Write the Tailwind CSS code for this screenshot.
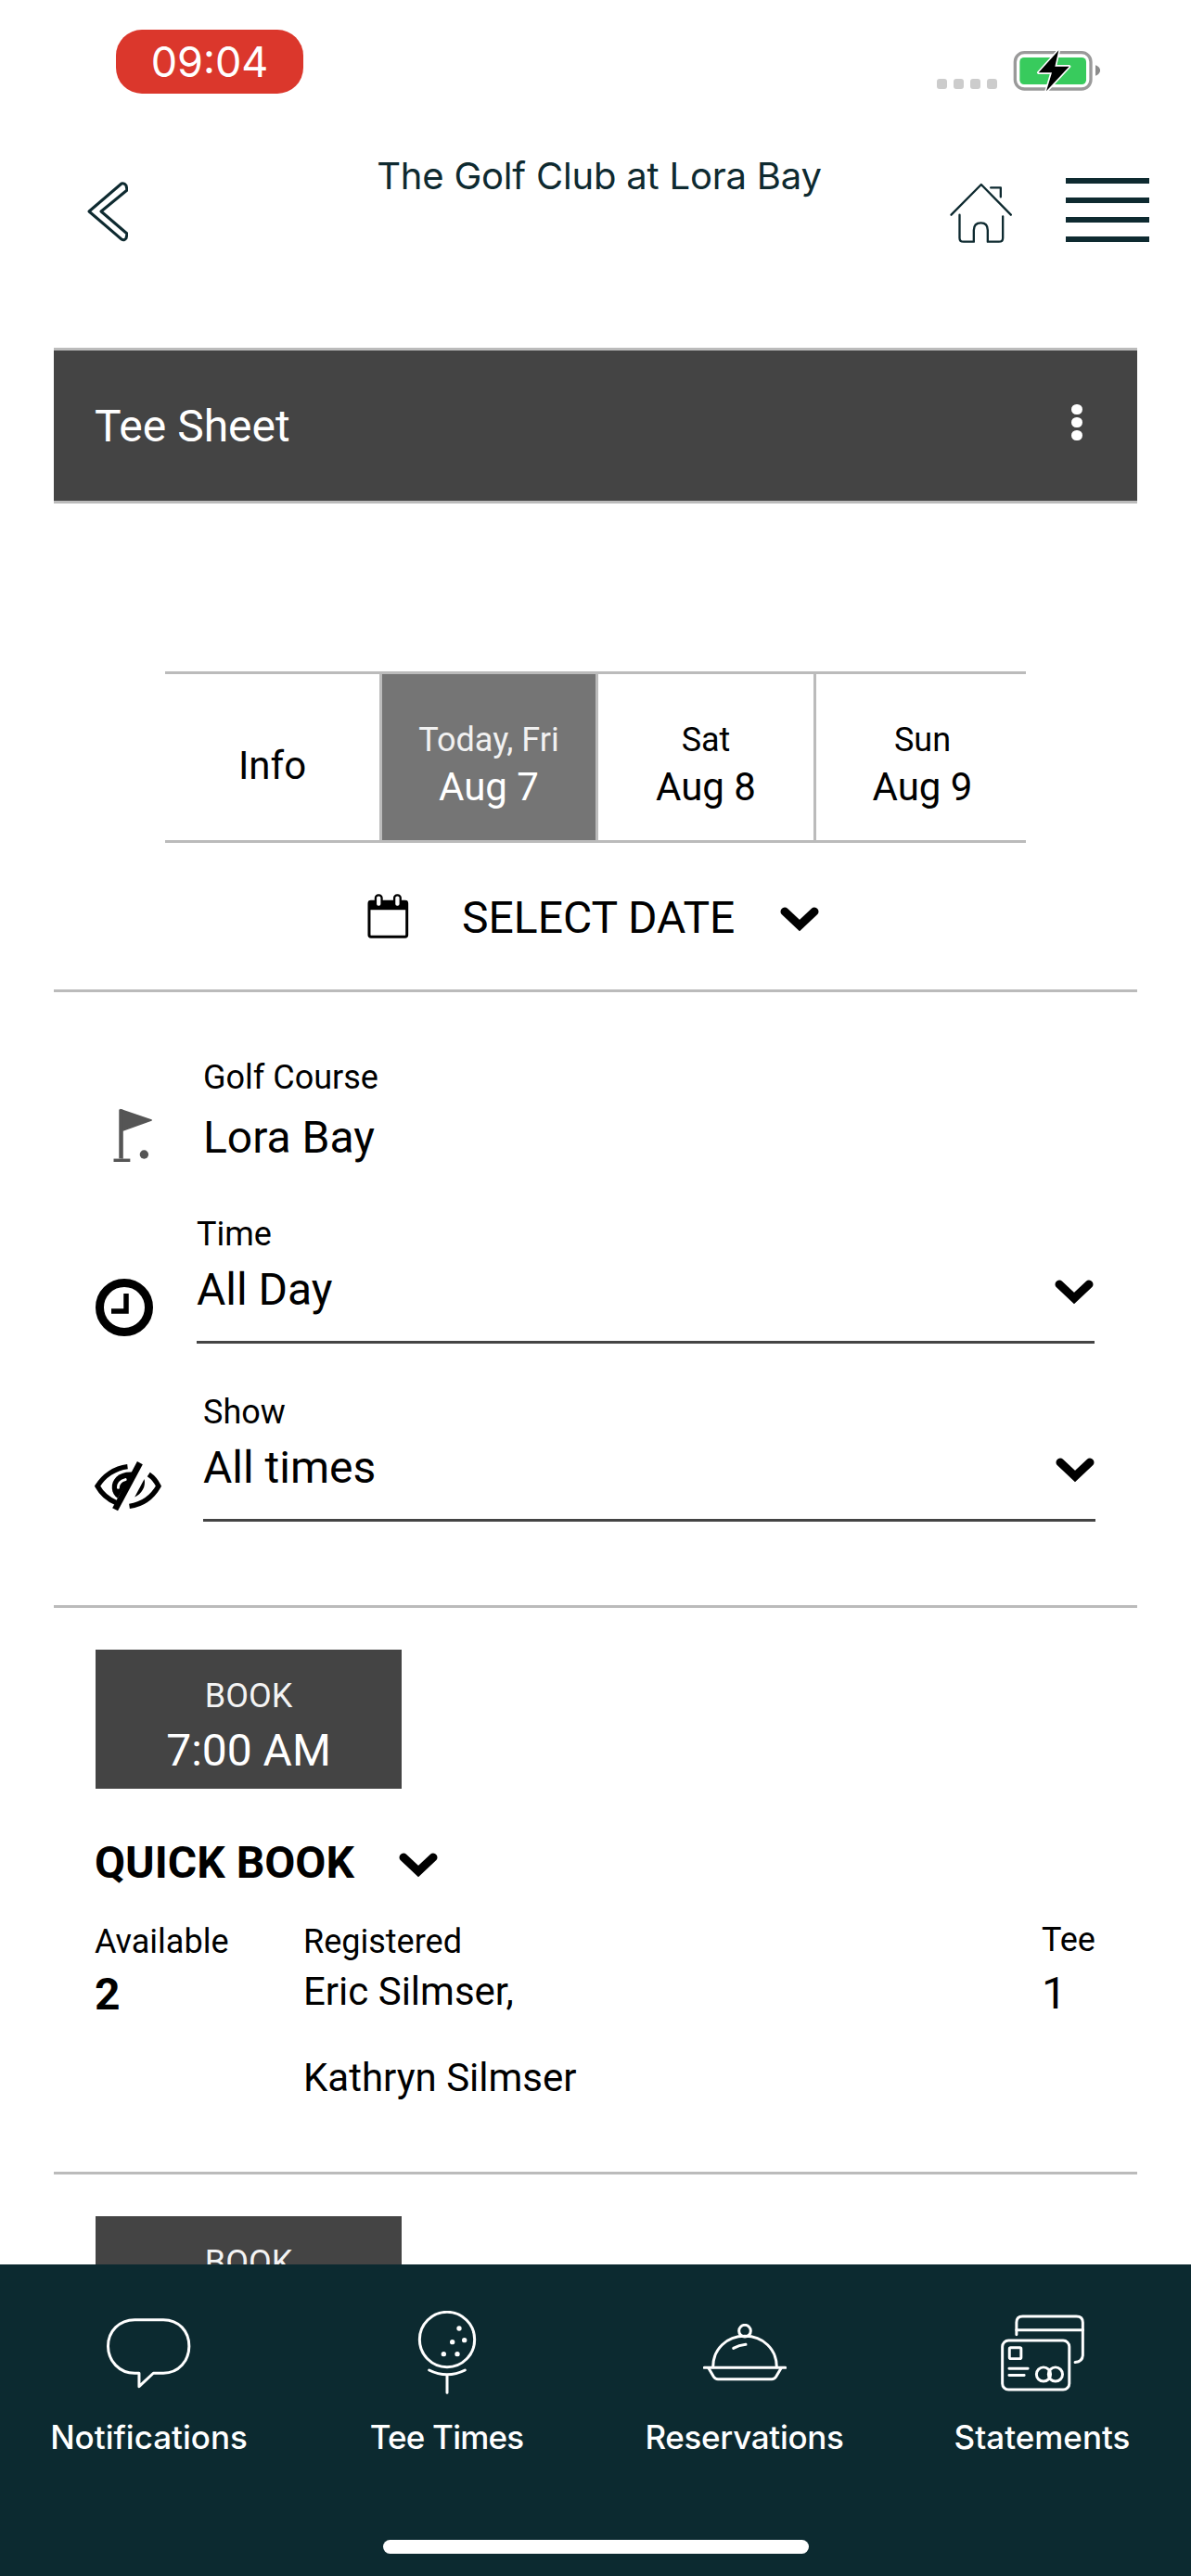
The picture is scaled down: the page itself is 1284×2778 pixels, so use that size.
<!DOCTYPE html>
<html lang="en">
<head>
  <meta charset="UTF-8" />
  <meta name="viewport" content="width=device-width, initial-scale=1" />
  <title>Tee Sheet</title>
  <script src="https://cdn.jsdelivr.net/npm/@tailwindcss/browser@4"></script>
</head>
<body class="bg-white">
<div class="relative w-[1284px] h-[2778px] overflow-hidden bg-white text-black font-['Roboto',sans-serif]">

  <!-- status bar -->
  <div class="h-[110px] flex items-start pt-[32px] pl-[125px]">
    <div class="w-[202px] h-[69px] rounded-[28px] bg-[#db372c] text-white flex items-center justify-center font-['Inter',sans-serif] text-[45px]">09:04</div>
    <div class="flex gap-[7px] mt-[53px] ml-[683px]">
      <span class="w-[11px] h-[11px] rounded-[3px] bg-[#ccc]"></span>
      <span class="w-[11px] h-[11px] rounded-[3px] bg-[#ccc]"></span>
      <span class="w-[11px] h-[11px] rounded-[3px] bg-[#ccc]"></span>
      <span class="w-[11px] h-[11px] rounded-[3px] bg-[#ccc]"></span>
    </div>
    <svg class="mt-[21px] ml-[17px]" width="94" height="46" viewBox="338 36 282 138">
      <rect x="345" y="47" width="245" height="118" rx="30" fill="none" stroke="#9a9a9a" stroke-width="10"/>
      <rect x="360" y="63" width="215" height="87" rx="14" fill="#38cb5d"/>
      <path d="M605 88 C616 92 622 100 620 108 C618 115 612 120 605 122 Z" fill="#8c8c8c"/>
      <path d="M486 40 L421 112 L464 112 L446 172 L520 92 L474 92 Z" fill="#000" stroke="#fff" stroke-width="10" stroke-linejoin="round" paint-order="stroke"/>
    </svg>
  </div>

  <!-- header -->
  <div class="h-[265px] flex items-start pl-[94px] pt-[82px]">
    <svg class="mt-[3px]" width="44" height="68" viewBox="94 195 44 68">
      <path d="M96 228 L131 198 Q134 197 136 200 L137 205 L109 228 L137 252 L136 257 Q134 260 131 258 Z" fill="none" stroke="#0e2a30" stroke-width="3" stroke-linejoin="round"/>
    </svg>
    <div class="ml-[266px] -mt-[27px] w-[484px] whitespace-nowrap text-center text-[#0e2a30] font-['Inter',sans-serif] text-[40px] tracking-[-0.2px] leading-[50px]">The Golf Club at Lora Bay</div>
    <svg class="ml-[134px] mt-[3px]" width="72" height="70" viewBox="130 460 215 210">
      <g fill="none" stroke="#0e2a30" stroke-width="7" stroke-linecap="round" stroke-linejoin="round">
        <path d="M140 570 L237 472 L333 570"/>
        <path d="M268 482 L300 482 L300 512"/>
        <path d="M167 570 L167 645 Q167 657 180 657 L213 657 L213 620 Q213 596 236 596 Q258 596 258 620 L258 657 L294 657 Q307 657 307 645 L307 575"/>
      </g>
    </svg>
    <div class="ml-[55px] w-[90px] flex flex-col gap-[15px]">
      <span class="h-[6px] bg-[#0e2a30]"></span>
      <span class="h-[6px] bg-[#0e2a30]"></span>
      <span class="h-[6px] bg-[#0e2a30]"></span>
      <span class="h-[6px] bg-[#0e2a30]"></span>
    </div>
  </div>

  <!-- title bar -->
  <div class="mx-[58px] h-[168px] bg-[#444] border-y-[3px] border-[#bbb] flex items-center justify-between pl-[44px] pr-[59px] text-white text-[48px]">
    <span class="pt-[2px]">Tee Sheet</span>
    <div class="flex flex-col gap-[3px] -mt-[8px]">
      <span class="w-[12px] h-[11px] rounded-full bg-white"></span>
      <span class="w-[12px] h-[11px] rounded-full bg-white"></span>
      <span class="w-[12px] h-[11px] rounded-full bg-white"></span>
    </div>
  </div>

  <!-- date tabs -->
  <div class="ml-[178px] mt-[181px] w-[928px] h-[185px] grid grid-cols-[231px_236px_232px_229px] border-y-[3px] border-[#bbb] text-center">
    <div class="flex items-center justify-center text-[42px] pt-[18px]">Info</div>
    <div class="border-x-[3px] border-[#bbb] bg-[#757575] text-white flex flex-col items-center justify-center pt-[17px]">
      <span class="text-[36px] leading-[44px] text-white/90">Today, Fri</span>
      <span class="text-[42px] leading-[52px] mt-[3px]">Aug 7</span>
    </div>
    <div class="flex flex-col items-center justify-center pt-[17px]">
      <span class="text-[36px] leading-[44px]">Sat</span>
      <span class="text-[42px] leading-[52px] mt-[3px]">Aug 8</span>
    </div>
    <div class="border-l-[3px] border-[#bbb] flex flex-col items-center justify-center pt-[17px] pl-[3px]">
      <span class="text-[36px] leading-[44px]">Sun</span>
      <span class="text-[42px] leading-[52px] mt-[3px]">Aug 9</span>
    </div>
  </div>

  <!-- date picker -->
  <div class="h-[161px] mx-[58px] border-b-[3px] border-[#bbb] flex items-start pl-[336px] pt-[53px]">
    <svg width="48" height="52" viewBox="45 35 145 155">
      <rect x="57" y="65" width="123" height="115" rx="6" fill="none" stroke="#000" stroke-width="9"/>
      <rect x="57" y="62" width="123" height="30" fill="#000"/>
      <rect x="78" y="44" width="20" height="38" rx="9" fill="#fff" stroke="#000" stroke-width="7"/>
      <rect x="139" y="44" width="20" height="38" rx="9" fill="#fff" stroke="#000" stroke-width="7"/>
    </svg>
    <span class="ml-[56px] text-[48px] leading-[56px]">SELECT DATE</span>
    <svg class="ml-[48px] mt-[15px]" width="44" height="28" viewBox="0 0 44 28">
      <path d="M6 6 L22 21 L38 6" fill="none" stroke="#000" stroke-width="9" stroke-linecap="round"/>
    </svg>
  </div>

  <!-- filters -->
  <div class="mx-[58px] h-[664px] border-b-[3px] border-[#bbb]">
    <div class="flex items-start pt-[70px] pl-[62px]">
      <svg class="mt-[54px] blur-[0.6px]" width="46" height="62" viewBox="120 95 147 198">
        <path d="M150 103 L258 140 L158 176 L158 272" fill="#555" stroke="#555" stroke-width="5" stroke-linejoin="round"/>
        <path d="M153 103 L153 272" stroke="#555" stroke-width="13"/>
        <path d="M128 278 L185 278" stroke="#555" stroke-width="11"/>
        <circle cx="233" cy="258" r="15" fill="#555"/>
      </svg>
      <div class="ml-[53px] flex flex-col">
        <span class="text-[36px] leading-[44px]">Golf Course</span>
        <span class="text-[48px] leading-[56px] mt-[15px]">Lora Bay</span>
      </div>
    </div>

    <div class="flex items-start mt-[53px] pl-[45px]">
      <svg class="mt-[70px]" width="62" height="62" viewBox="0 0 62 62">
        <circle cx="31" cy="31" r="26.5" fill="none" stroke="#000" stroke-width="9"/>
        <path d="M33 16 L33 35 L17 35" fill="none" stroke="#000" stroke-width="5.5"/>
      </svg>
      <div class="ml-[47px] w-[968px] border-b-[3px] border-[#444] h-[140px] flex flex-col relative">
        <span class="text-[36px] leading-[44px]">Time</span>
        <span class="text-[48px] leading-[56px] mt-[10px]">All Day</span>
        <svg class="absolute right-0 top-[70px]" width="44" height="28" viewBox="0 0 44 28">
          <path d="M6 6 L22 21 L38 6" fill="none" stroke="#000" stroke-width="9" stroke-linecap="round"/>
        </svg>
      </div>
    </div>

    <div class="flex items-start mt-[52px] pl-[42px]">
      <svg class="mt-[72px]" width="77" height="59" viewBox="60 1245 230 175">
        <path d="M172 1270 C130 1275 95 1300 75 1333 C90 1360 110 1376 135 1386" fill="none" stroke="#000" stroke-width="16"/>
        <path d="M240 1295 C255 1305 265 1318 272 1333 C250 1372 220 1392 178 1398" fill="none" stroke="#000" stroke-width="16"/>
        <path d="M190 1288 C145 1284 120 1310 122 1340 C123 1355 130 1365 140 1372 Z" fill="#000"/>
        <path d="M165 1312 C150 1316 142 1326 142 1338" fill="none" stroke="#fff" stroke-width="9" stroke-linecap="round"/>
        <path d="M226 1310 C232 1335 217 1358 195 1368 Z" fill="#000"/>
        <path d="M212 1258 L132 1408" stroke="#000" stroke-width="20"/>
      </svg>
      <div class="ml-[42px] w-[962px] border-b-[3px] border-[#444] h-[140px] flex flex-col relative">
        <span class="text-[36px] leading-[44px]">Show</span>
        <span class="text-[48px] leading-[56px] mt-[10px]">All times</span>
        <svg class="absolute right-0 top-[70px]" width="44" height="28" viewBox="0 0 44 28">
          <path d="M6 6 L22 21 L38 6" fill="none" stroke="#000" stroke-width="9" stroke-linecap="round"/>
        </svg>
      </div>
    </div>
  </div>

  <!-- tee time row -->
  <div class="mx-[58px] h-[611px] border-b-[3px] border-[#bbb] pt-[45px] pl-[44px] pr-[45px]">
    <div class="ml-[1px] w-[330px] h-[150px] bg-[#444] text-white flex flex-col items-center justify-center pt-[14px]">
      <span class="text-[36px] leading-[50px] text-white/95">BOOK</span>
      <span class="text-[48px] leading-[60px] mt-[4px]">7:00 AM</span>
    </div>
    <div class="flex items-center mt-[52px]">
      <span class="text-[48px] leading-[56px] font-bold">QUICK BOOK</span>
      <svg class="ml-[47px] mt-[4px]" width="44" height="28" viewBox="0 0 44 28">
        <path d="M6 6 L22 21 L38 6" fill="none" stroke="#000" stroke-width="9" stroke-linecap="round"/>
      </svg>
    </div>
    <div class="flex mt-[35px]">
      <div class="w-[225px]">
        <div class="text-[36px] leading-[44px]">Available</div>
        <div class="text-[48px] leading-[56px] font-bold mt-[7px]">2</div>
      </div>
      <div class="flex-1">
        <div class="text-[36px] leading-[44px]">Registered</div>
        <div class="text-[42px] leading-[56px] mt-[4px]">Eric Silmser,</div>
        <div class="text-[42px] leading-[56px] mt-[37px]">Kathryn Silmser</div>
      </div>
      <div class="w-[58px]">
        <div class="text-[36px] leading-[44px] -mt-[2px]">Tee</div>
        <div class="text-[48px] leading-[56px] mt-[8px]">1</div>
      </div>
    </div>
  </div>

  <div class="ml-[103px] mt-[45px] w-[330px] h-[150px] bg-[#444] text-white flex flex-col items-center justify-center pt-[14px]">
    <span class="text-[36px] leading-[50px] text-white/95">BOOK</span>
    <span class="text-[48px] leading-[60px] mt-[4px]">7:15 AM</span>
  </div>

  <!-- bottom nav, sits over the scrolling list -->
  <div class="absolute left-0 bottom-0 w-full h-[336px] bg-[#0c2a30] text-white font-['Inter',sans-serif]">
    <div class="grid grid-cols-4 pt-[50px]">
      <div class="flex flex-col items-center">
        <div class="h-[90px] flex items-center">
          <svg width="94" height="77" viewBox="225 25 280 230">
            <path d="M332 205 L332 248 L378 205 L410 205 C460 205 493 165 493 118 C493 70 460 33 410 33 L318 33 C268 33 232 70 232 118 C232 165 268 205 318 205 Z" fill="none" stroke="#fff" stroke-width="9" stroke-linejoin="round"/>
          </svg>
        </div>
      </div>
      <div class="flex flex-col items-center">
        <div class="h-[90px] flex items-center">
          <svg width="64" height="90" viewBox="1230 5 192 270">
            <circle cx="1326" cy="98" r="89" fill="none" stroke="#fff" stroke-width="9"/>
            <path d="M1268 197 Q1326 226 1384 197 M1326 215 L1326 270" fill="none" stroke="#fff" stroke-width="9" stroke-linecap="round"/>
            <circle cx="1365" cy="62" r="8" fill="#fff"/>
            <circle cx="1343" cy="106" r="8" fill="#fff"/>
            <circle cx="1382" cy="100" r="8" fill="#fff"/>
            <circle cx="1315" cy="145" r="8" fill="#fff"/>
            <circle cx="1359" cy="145" r="8" fill="#fff"/>
          </svg>
        </div>
      </div>
      <div class="flex flex-col items-center">
        <div class="h-[90px] flex items-center">
          <svg width="90" height="62" viewBox="174 48 270 186">
            <g fill="none" stroke="#fff" stroke-width="9" stroke-linecap="round" stroke-linejoin="round">
              <circle cx="309" cy="71" r="19"/>
              <path d="M206 188 C206 130 250 88 309 88 C368 88 412 130 412 188"/>
              <path d="M178 190 L440 190"/>
              <path d="M192 192 L208 219 Q213 227 222 227 L396 227 Q405 227 410 219 L426 192"/>
              <path d="M272 127 Q290 117 312 115"/>
            </g>
          </svg>
        </div>
      </div>
      <div class="flex flex-col items-center">
        <div class="h-[90px] flex items-center">
          <svg width="90" height="83" viewBox="1136 15 272 249">
            <g fill="none" stroke="#fff" stroke-width="9" stroke-linecap="round" stroke-linejoin="round">
              <path d="M1187 80 L1187 40 Q1187 20 1207 20 L1382 20 Q1403 20 1403 40 L1403 145 Q1403 168 1378 170"/>
              <path d="M1187 65 L1403 65"/>
              <rect x="1141" y="99" width="218" height="160" rx="20"/>
              <rect x="1164" y="122" width="38" height="36" rx="4"/>
              <path d="M1163 190 L1224 190 M1163 212 L1212 212"/>
              <circle cx="1275" cy="209" r="23"/>
              <circle cx="1314" cy="209" r="23"/>
            </g>
          </svg>
        </div>
      </div>
    </div>
    <div class="grid grid-cols-4 text-center text-[35px] font-medium leading-[44px] mt-[24px]">
      <span>Notifications</span>
      <span class="tracking-[-0.8px]">Tee Times</span>
      <span class="tracking-[-0.3px]">Reservations</span>
      <span>Statements</span>
    </div>
    <div class="absolute left-[413px] bottom-[24px] w-[459px] h-[15px] rounded-full bg-white"></div>
  </div>
</div>
</body>
</html>
